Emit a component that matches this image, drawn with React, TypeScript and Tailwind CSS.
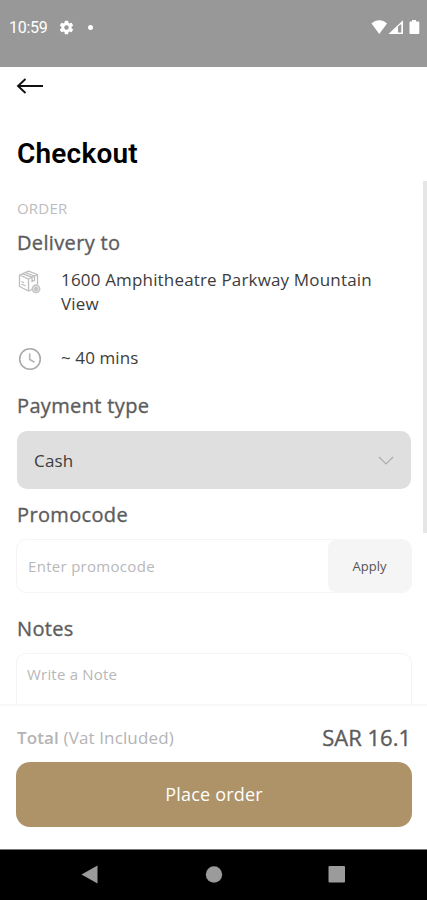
import React, { useState } from 'react';

const GearIcon: React.FC = () => (
  <svg width="17" height="17" viewBox="0 0 24 24" fill="#fff">
    <path d="M19.14 12.94c.04-.3.06-.61.06-.94s-.02-.64-.07-.94l2.03-1.58a.49.49 0 0 0 .12-.61l-1.92-3.32a.49.49 0 0 0-.59-.22l-2.39.96c-.5-.38-1.03-.7-1.62-.94l-.36-2.54a.48.48 0 0 0-.48-.41h-3.84c-.24 0-.43.17-.47.41l-.36 2.54c-.59.24-1.13.57-1.62.94l-2.39-.96c-.22-.08-.47 0-.59.22L2.74 8.87c-.12.21-.08.47.12.61l2.03 1.58c-.05.3-.09.63-.09.94s.02.64.07.94l-2.03 1.58a.49.49 0 0 0-.12.61l1.92 3.32c.12.22.37.29.59.22l2.39-.96c.5.38 1.03.7 1.62.94l.36 2.54c.05.24.24.41.48.41h3.84c.24 0 .44-.17.47-.41l.36-2.54c.59-.24 1.13-.56 1.62-.94l2.39.96c.22.08.47 0 .59-.22l1.92-3.32a.49.49 0 0 0-.12-.61zM12 15.2a3.2 3.2 0 1 1 0-6.4 3.2 3.2 0 0 1 0 6.4z" />
  </svg>
);

const StatusBar: React.FC = () => (
  <div className="flex h-[67px] shrink-0 items-start justify-between bg-[#989898] pt-[19px]">
    <div className="flex h-4 items-center pl-[9px]">
      <span className="mt-[2px] w-[49px] font-[Roboto] text-base leading-4 tracking-[-0.3px] text-white">10:59</span>
      <GearIcon />
      <span className="ml-[13px] h-[5px] w-[5px] rounded-full bg-white" />
    </div>
    <svg width="56" height="16" viewBox="0 0 56 16" fill="#fff">
      <path d="M0.5 4.5C3 2 5.500 1.200 8.250 1.200S13.500 2 16 4.500L8.250 15z" />
      <path d="M17.500 15L32 1.200V15zM27 7.500V13.600H30.300V4.900z" fillRule="evenodd" />
      <path d="M38.500 2.500H41V1h4v1.500h2.500q.8 0 .8.800V14.200q0 .8-.8.800h-8.200q-.8 0-.8-.8V3.300q0-.8.800-.8z" />
    </svg>
  </div>
);

// parcel with a small badge in the corner
const ParcelIcon: React.FC = () => (
  <svg width="24" height="24" viewBox="0 0 24 24" fill="none" stroke="#bdbdbd" strokeWidth="1.300" strokeLinejoin="round">
    <path d="M1.500 5L10.500 1.200L19.500 4.500V14.500M1.500 5V16.500L10.500 21L15 19M1.500 5L10.500 9L19.500 4.500M10.500 9V21" />
    <path d="M4.500 3.800L14 7.200V11.500L16.500 10.300V6L7.500 2.600" />
    <path d="M3.500 14L7.500 16M3.500 11.500L6 12.700" />
    <circle cx="18" cy="18.800" r="3.800" fill="#dedede" stroke="#c4c4c4" />
    <circle cx="18" cy="18.800" r="1.200" />
  </svg>
);

const ClockIcon: React.FC = () => (
  <svg width="24" height="24" viewBox="0 0 24 24" fill="none" stroke="#a9a9a9" strokeWidth="1.600">
    <circle cx="12" cy="12" r="10.300" />
    <path d="M11.700 6.500V12.500L16.500 15.200" stroke="#b4b4b4" />
  </svg>
);

const SectionTitle: React.FC<{ children: React.ReactNode }> = ({ children }) => (
  <h2 className="text-[20px] leading-6 tracking-[0.35px] text-[#5c5c5c] [-webkit-text-stroke:0.35px_#5c5c5c]">
    {children}
  </h2>
);

const App: React.FC = () => {
  const [promo, setPromo] = useState('');
  const [note, setNote] = useState('');

  return (
    <div className="relative flex h-[900px] w-[427px] flex-col overflow-hidden bg-white font-['Open_Sans',sans-serif]">
      <StatusBar />

      <main className="flex min-h-0 flex-1 flex-col overflow-hidden px-4">
        <button className="mt-[11px] h-4 w-7 shrink-0" aria-label="Back">
          <svg width="28" height="16" viewBox="0 0 28 16" fill="none" stroke="#111" strokeWidth="1.900">
            <path d="M27 8H2M9.500 1L2 8L9.500 15" />
          </svg>
        </button>
        <h1 className="mt-[43px] pt-px pl-px font-[Roboto] text-[28px] leading-8 font-semibold tracking-[0.2px] text-black">
          Checkout
        </h1>

        <div className="mt-[28px] pl-px text-[15px] leading-5 tracking-[0.2px] text-[#bdbdbd]">ORDER</div>
        <div className="mt-[13px] pl-px">
          <SectionTitle>Delivery to</SectionTitle>
        </div>
        <div className="mt-[13px] flex">
          <div className="mt-[2px] w-[45px] shrink-0 pl-[2px]">
            <ParcelIcon />
          </div>
          <p className="w-[330px] text-[17px] leading-6 tracking-[0.17px] text-[#3c3c3c]">
            1600 Amphitheatre Parkway Mountain View
          </p>
        </div>
        <div className="mt-[30px] flex">
          <div className="mt-[1px] w-[45px] shrink-0 pl-[2px]">
            <ClockIcon />
          </div>
          <p className="text-[17px] leading-6 tracking-[0.1px] text-[#3c3c3c]">~ 40 mins</p>
        </div>

        <div className="mt-[23px] pl-px">
          <SectionTitle>Payment type</SectionTitle>
        </div>
        <button className="mt-[13px] ml-px flex h-[58px] w-[394px] shrink-0 items-center justify-between rounded-[10px] bg-[#dfdfdf] pr-[17px] pl-[17px]">
          <span className="pt-px text-[17px] tracking-[0.2px] text-[#3c3c3c]">Cash</span>
          <svg width="16" height="9" viewBox="0 0 16 9" fill="none" stroke="#aaa" strokeWidth="1.100">
            <path d="M1 1L8 8L15 1" />
          </svg>
        </button>

        <div className="mt-[14px] pl-px">
          <SectionTitle>Promocode</SectionTitle>
        </div>
        <div className="mt-3 flex h-[54px] w-[396px] shrink-0 overflow-hidden rounded-[10px] border border-[#f4f4f4]">
          <input
            value={promo}
            onChange={(e) => setPromo(e.target.value)}
            placeholder="Enter promocode"
            className="min-w-0 flex-1 pl-[11px] text-[15px] tracking-[0.3px] outline-none placeholder:text-[#b8b8b8]"
          />
          <button className="w-[83px] rounded-l-[8px] bg-[#f5f5f5] pt-px text-[13px] text-[#555]">Apply</button>
        </div>

        <div className="mt-6 pl-px">
          <SectionTitle>Notes</SectionTitle>
        </div>
        <textarea
          value={note}
          onChange={(e) => setNote(e.target.value)}
          placeholder="Write a Note"
          className="mt-3 h-[110px] w-[396px] shrink-0 resize-none rounded-[10px] border border-[#f4f4f4] px-[10px] pt-[9px] text-[15px] leading-[22px] tracking-[0.2px] outline-none placeholder:text-[#b8b8b8]"
        />
      </main>

      {/* scroll indicator */}
      <div className="absolute top-[181px] right-0 h-[352px] w-1 bg-[#e6e6e6]" />

      <footer className="h-[145px] shrink-0 border-t-2 border-[#f7f7f7] px-4">
        <div className="flex h-14 items-center justify-between pt-[7px] pl-px">
          <span className="text-[17px] tracking-[0.13px] text-[#b4b4b4]">
            <b className="font-semibold">Total</b> (Vat Included)
          </span>
          <span className="text-[22px] text-[#5c5c5c] [-webkit-text-stroke:0.35px_#5c5c5c]">SAR 16.1</span>
        </div>
        <button className="h-[65px] w-[396px] rounded-[14px] bg-[#ae9368] text-[18px] tracking-[0.2px] text-white">
          Place order
        </button>
      </footer>

      <nav className="h-[51px] shrink-0 border-t border-[#777] bg-black">
        <svg width="427" height="50" viewBox="0 0 427 50" fill="#9b9b9b">
          <path d="M81.500 24.500L97.500 15.500V33.500z" />
          <circle cx="214" cy="24.500" r="8.200" />
          <rect x="328.500" y="16" width="16.500" height="16.500" rx="1" />
        </svg>
      </nav>
    </div>
  );
};

export default App;
